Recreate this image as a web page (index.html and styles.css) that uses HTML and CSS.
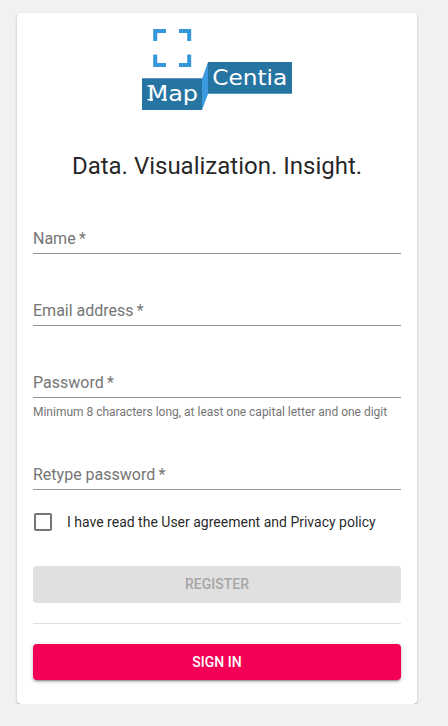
FILE: index.html
```html
<!DOCTYPE html>
<html lang="en">
<head>
<meta charset="utf-8">
<title>MapCentia</title>
<link rel="stylesheet" href="styles.css">
</head>
<body>
<main class="card">
  <svg class="logo" width="150" height="82" viewBox="0 0 150 82" role="img" aria-label="MapCentia">
    <path class="frame" d="M13.2 12V2H24M37 2H47.2V12M47.2 25.500V36H37M24 36H13.200V25.500"/>
    <path class="fold" d="M60 50L66 33V65L60 81Z"/>
    <path class="panel" d="M0 49.300H60V81H0ZM66 33H150V64.700H66Z"/>
    <text class="word" x="5.500" y="71.500" textLength="50.500" lengthAdjust="spacingAndGlyphs">Map</text>
    <text class="word" x="70.200" y="56.200" textLength="75" lengthAdjust="spacingAndGlyphs">Centia</text>
    <path class="slab" d="M5.500 57H8.500M5.500 70.800H11M19.500 70.800H25"/>
  </svg>
  <h1 class="title">Data. Visualization. Insight.</h1>
  <form class="form">
    <div class="field">Name&thinsp;*</div>
    <div class="field">Email address&thinsp;*</div>
    <div class="field">Password&thinsp;*</div>
    <p class="helper">Minimum 8 characters long, at least one capital letter and one digit</p>
    <div class="field field-retype">Retype password&thinsp;*</div>
    <label class="agree"><span class="box"></span><span>I have read the User agreement and Privacy policy</span></label>
    <button class="button register" type="button" disabled>Register</button>
  </form>
  <hr class="divider">
  <button class="button signin" type="button">Sign in</button>
</main>
</body>
</html>
```
FILE: styles.css
```css
* { box-sizing: border-box; }
body {
  margin: 0;
  background: #f1f1f1;
  color: rgba(0, 0, 0, 0.87);
  font-family: Roboto, sans-serif;
}
.card {
  width: 400px;
  height: 691px;
  margin: 13px 0 0 17px;
  padding: 16px;
  background: #fff;
  border-radius: 4px;
  box-shadow: 0 1px 3px rgba(0, 0, 0, 0.2), 0 1px 1px rgba(0, 0, 0, 0.14), 0 2px 1px -1px rgba(0, 0, 0, 0.2);
}
.logo { display: block; margin: 0 auto; }
.frame { fill: none; stroke: #3498db; stroke-width: 4; }
.fold { fill: #3c9be0; }
.panel { fill: #2574a2; }
.word {
  fill: #fff;
  font: 21px "DejaVu Sans", sans-serif;
}
.slab { stroke: #fff; stroke-width: 1.4; }
.title {
  margin: 39px 0 0;
  font-size: 24px;
  font-weight: 400;
  line-height: 32px;
  text-align: center;
}
.form { display: flex; flex-direction: column; }
.field {
  height: 32px;
  margin-top: 40px;
  border-bottom: 1px solid #949494;
  color: #757575;
  font-size: 16px;
  line-height: 34px;
}
.helper {
  margin: 4px 0 0;
  color: #757575;
  font-size: 12px;
  line-height: 20px;
  letter-spacing: -0.01px;
}
.field-retype { margin-top: 36px; }
.agree {
  display: flex;
  align-items: center;
  gap: 15px;
  height: 42px;
  margin-top: 11px;
  padding-left: 1px;
  font-size: 14px;
}
.box {
  width: 18px;
  height: 18px;
  border: 2px solid #757575;
  border-radius: 2px;
}
.button {
  display: block;
  width: 100%;
  height: 36px;
  padding: 0;
  border: 0;
  border-radius: 4px;
  font: 500 14px/24px Roboto, sans-serif;
  text-transform: uppercase;
}
.register {
  height: 37px;
  margin-top: 23px;
  padding-bottom: 1px;
  background: #e0e0e0;
  color: #a6a6a6;
}
.divider { height: 1px; margin: 20px 0; border: 0; background: #e0e0e0; }
.signin {
  background: #f50057;
  color: #fff;
  box-shadow: 0 1px 5px rgba(0, 0, 0, 0.2), 0 2px 2px rgba(0, 0, 0, 0.14), 0 3px 1px -2px rgba(0, 0, 0, 0.2);
}
```
